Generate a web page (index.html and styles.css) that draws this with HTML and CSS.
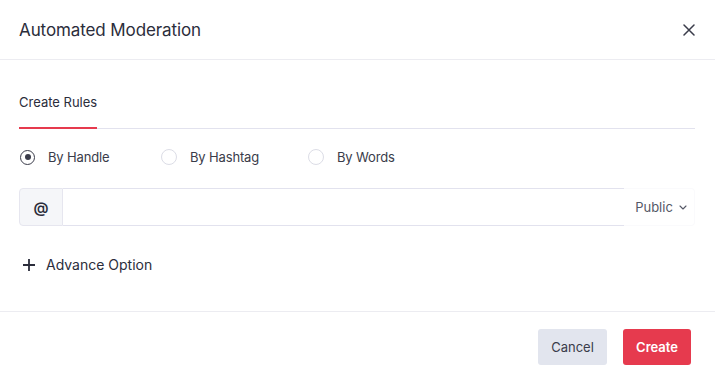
FILE: index.html
```html
<!DOCTYPE html>
<html lang="en">
<head>
    <meta charset="UTF-8">
    <meta name="viewport" content="width=device-width, initial-scale=1.0">
    <title>Automated Moderation</title>
    <link rel="stylesheet" href="styles.css">
</head>
<body>
    <div class="modal">
        <header class="modal-header">
            <h1>Automated Moderation</h1>
            <button class="close-button" aria-label="Close">
                <svg width="12" height="12" viewBox="0 0 12 12"><path d="M1 1L11 11M11 1L1 11" stroke="#3a3c4a" stroke-width="1.5" stroke-linecap="round"/></svg>
            </button>
        </header>

        <section class="modal-body">
            <div class="tabs">
                <div class="tab active">Create Rules</div>
            </div>

            <div class="radio-row">
                <label class="radio checked"><span class="circle"></span>By Handle</label>
                <label class="radio"><span class="circle"></span>By Hashtag</label>
                <label class="radio"><span class="circle"></span>By Words</label>
            </div>

            <div class="input-group">
                <span class="addon">@</span>
                <input type="text">
                <div class="select">Public
                    <svg width="8" height="5" viewBox="0 0 8 5"><path d="M1 1L4 4L7 1" fill="none" stroke="#555866" stroke-width="1.1" stroke-linecap="round" stroke-linejoin="round"/></svg>
                </div>
            </div>

            <div class="advance">
                <svg width="14" height="14" viewBox="0 0 14 14"><path d="M7 1V13M1 7H13" stroke="#2b2d3b" stroke-width="1.8"/></svg>
                Advance Option
            </div>
        </section>

        <footer class="modal-footer">
            <button class="btn cancel">Cancel</button>
            <button class="btn create">Create</button>
        </footer>
    </div>
</body>
</html>
```

FILE: styles.css
```css
body {
    margin: 0;
    padding: 0;
    background-color: white;
    font-family: Inter, "Noto Sans", sans-serif;
    color: #2b2d3b;
}
.modal {
    width: 715px;
    height: 380px;
    background-color: white;
}
.modal-header {
    height: 59px;
    border-bottom: 1px solid #ececf1;
    display: flex;
    align-items: center;
    justify-content: space-between;
    padding: 0 20px 0 19px;
}
.modal-header h1 {
    margin: 0;
    font-size: 17px;
    font-weight: 400;
    color: #2b2d3b;
    letter-spacing: -0.1px;
}
.close-button {
    background: none;
    border: none;
    padding: 0;
    display: flex;
    cursor: pointer;
}
.modal-body {
    padding: 34px 20px 0 19px;
    height: 217px;
    border-bottom: 1px solid #ececf1;
}
.tabs {
    border-bottom: 1px solid #e2e2ee;
    display: flex;
}
.tab {
    font-size: 13px;
    color: #2b2d3b;
}
.tab.active {
    box-shadow: inset 0 -2px 0 #e63a4e;
    margin-bottom: -1px;
    padding-bottom: 19px;
}
.radio-row {
    display: flex;
    margin-top: 19px;
    height: 18px;
    align-items: center;
}
.radio {
    display: flex;
    align-items: center;
    font-size: 13px;
    color: #3a3c4a;
    gap: 13px;
    letter-spacing: -0.15px;
}
.radio:nth-child(1) { width: 141px; }
.radio:nth-child(2) { width: 147px; }
.circle {
    width: 14px;
    height: 14px;
    border: 1px solid #dcdde6;
    border-radius: 50%;
    margin-left: 1px;
    display: flex;
    align-items: center;
    justify-content: center;
}
.radio.checked .circle {
    border: 1.5px solid #3a3c4a;
    width: 13px;
    height: 13px;
}
.radio.checked .circle::after {
    content: "";
    width: 6px;
    height: 6px;
    border-radius: 50%;
    background-color: #3a3c4a;
}
.input-group {
    display: flex;
    margin-top: 22px;
    height: 38px;
}
.addon {
    width: 42px;
    background-color: #f5f6f9;
    border: 1px solid #e6e6ef;
    border-radius: 4px 0 0 4px;
    display: flex;
    align-items: center;
    justify-content: center;
    font-size: 15px;
    font-weight: 600;
    color: #2b2d3b;
}
.input-group input {
    flex: 1;
    border: none;
    border-top: 1px solid #e2e2ee;
    border-bottom: 1px solid #e2e2ee;
    outline: none;
    padding: 0 10px;
    font-size: 13px;
    margin: 0;
    background-color: white;
}
.select {
    width: 71px;
    box-sizing: border-box;
    display: flex;
    align-items: center;
    justify-content: center;
    gap: 6px;
    padding-left: 4px;
    font-size: 13px;
    color: #555866;
    background-color: white;
    border: 1px solid #fafafc;
    border-left: none;
    border-radius: 0 4px 4px 0;
}
.advance {
    display: flex;
    align-items: center;
    gap: 10px;
    margin-top: 30px;
    margin-left: 3px;
    font-size: 14px;
    color: #2b2d3b;
}
.modal-footer {
    display: flex;
    justify-content: flex-end;
    gap: 16px;
    padding: 17px 24px 0 0;
}
.btn {
    height: 36px;
    border: none;
    border-radius: 3px;
    font-family: Inter, "Noto Sans", sans-serif;
    font-size: 13px;
    cursor: pointer;
}
.cancel {
    width: 69px;
    background-color: #e2e5ee;
    color: #3a3c4a;
}
.create {
    width: 68px;
    background-color: #e63a4e;
    color: white;
    font-weight: 600;
}
```
